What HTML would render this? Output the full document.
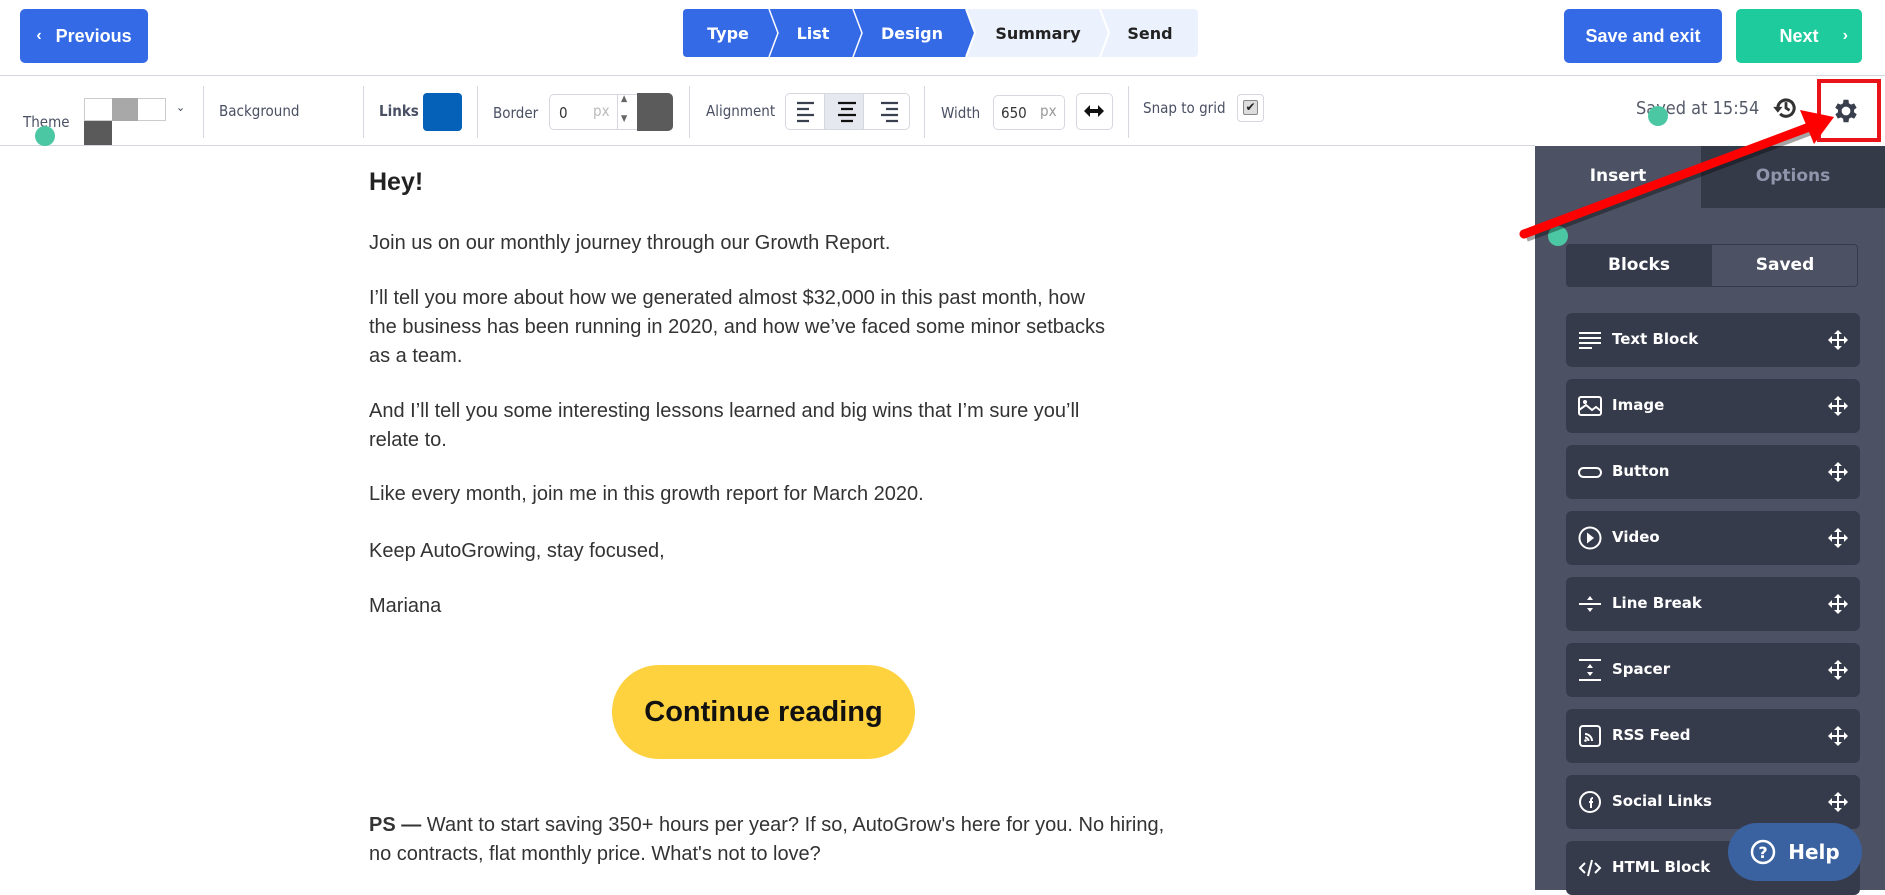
<!DOCTYPE html>
<html><head><meta charset="utf-8"><style>
*{box-sizing:border-box;margin:0;padding:0}
body{width:1885px;height:890px;overflow:hidden;background:#fff;font-family:"Liberation Sans",sans-serif;position:relative;color:#333}
.abs{position:absolute}
.btn{position:absolute;border-radius:5px;color:#fff;font-weight:bold;font-size:18px;display:flex;align-items:center;justify-content:center}
.lbl{position:absolute;font-size:15px;color:#4a5064;font-family:"DejaVu Sans Condensed","DejaVu Sans",sans-serif}
.div{position:absolute;top:86px;width:1px;height:52px;background:#d5d8de}
.side{position:absolute;left:1535px;top:146px;width:350px;height:744px;background:#4c5264}
.item{position:absolute;left:31px;width:294px;height:54px;background:#363b4b;border-radius:6px;color:#fff;font-family:"DejaVu Sans",sans-serif;font-weight:bold;font-size:15px}
.item span{position:absolute;left:46px;top:17px}
.item svg.ic{position:absolute;left:12px;top:15px}
.item svg.mv{position:absolute;right:12px;top:17px}
.c p{position:absolute;left:369px;font-size:20px;line-height:29px;color:#333;white-space:nowrap}
.dot{position:absolute;width:20px;height:20px;border-radius:50%;background:#4cc7a4}
</style></head><body>
<!-- top bar -->
<div class="btn" style="left:20px;top:9px;width:128px;height:54px;background:#356ae6"><span style="font-size:16px;margin-right:14px">‹</span>Previous</div>
<svg class="abs" style="left:683px;top:9px" width="515" height="48">
<rect x="0" y="0" width="515" height="48" rx="4" fill="#ecf2fd"/>
<path d="M4 0H283L292 24L283 48H4Q0 48 0 44V4Q0 0 4 0Z" fill="#356ae6"/>
<path d="M86 0L95 24L86 48M170 0L179 24L170 48" stroke="#fff" stroke-width="1.5" fill="none"/>
<path d="M283 0L292 24L283 48M417 0L426 24L417 48" stroke="#fff" stroke-width="2" fill="none"/>
<g font-family="DejaVu Sans, sans-serif" font-weight="bold" font-size="16" text-anchor="middle">
<text x="45" y="30" fill="#fff">Type</text><text x="130" y="30" fill="#fff">List</text><text x="229" y="30" fill="#fff">Design</text>
<text x="355" y="30" fill="#222">Summary</text><text x="467" y="30" fill="#222">Send</text></g>
</svg>
<div class="btn" style="left:1564px;top:9px;width:158px;height:54px;background:#356ae6">Save and exit</div>
<div class="btn" style="left:1736px;top:9px;width:126px;height:54px;background:#1dcb9c">Next<span style="position:absolute;right:14px;font-size:16px">›</span></div>
<div class="abs" style="left:0;top:75px;width:1885px;height:1px;background:#d3d6dd"></div>
<div class="abs" style="left:0;top:145px;width:1535px;height:1px;background:#d3d6dd"></div>
<!-- toolbar -->
<div class="lbl" style="left:23px;top:113px">Theme</div>
<div class="abs" style="left:84px;top:98px;width:82px;height:23px;border:1px solid #ccc;background:#fff"></div>
<div class="abs" style="left:112px;top:98px;width:26px;height:23px;background:#a8a8a8"></div>
<div class="abs" style="left:84px;top:121px;width:28px;height:24px;background:#5a5a5a"></div>
<div class="lbl" style="left:176px;top:100px;font-size:12px">⌄</div>
<div class="div" style="left:203px"></div>
<div class="lbl" style="left:219px;top:102px">Background</div>
<div class="div" style="left:363px"></div>
<div class="lbl" style="left:379px;top:102px;font-weight:bold">Links</div>
<div class="abs" style="left:423px;top:93px;width:39px;height:38px;background:#0560b8;border-radius:4px"></div>
<div class="div" style="left:477px"></div>
<div class="lbl" style="left:493px;top:104px">Border</div>
<div class="abs" style="left:549px;top:94px;width:124px;height:36px;border:1px solid #d5d8de;border-radius:5px;background:#fff"></div>
<div class="abs" style="left:637px;top:93px;width:36px;height:38px;background:#5b5b5b;border-radius:0 5px 5px 0"></div>
<div class="abs" style="left:617px;top:94px;width:1px;height:36px;background:#d5d8de"></div>
<div class="lbl" style="left:559px;top:104px;color:#333">0</div>
<div class="lbl" style="left:593px;top:102px;color:#bbb">px</div>
<div class="lbl" style="left:621px;top:94px;font-size:9px;color:#666">▲</div>
<div class="lbl" style="left:621px;top:114px;font-size:9px;color:#666">▼</div>
<div class="div" style="left:689px"></div>
<div class="lbl" style="left:706px;top:102px">Alignment</div>
<div class="abs" style="left:785px;top:93px;width:125px;height:37px;border:1px solid #d5d8de;border-radius:5px;background:#fff;overflow:hidden"><div style="position:absolute;left:38px;top:0;width:40px;height:37px;background:#e5e8ee;border-left:1px solid #d5d8de;border-right:1px solid #d5d8de"></div></div>
<svg class="abs" style="left:785px;top:93px" width="125" height="37"><g stroke="#3a4050" stroke-width="2.2"><path d="M12 10h17M12 16h12M12 22h17M12 28h12"/><path d="M53 10h18M56 16h12M53 22h18M56 28h12" stroke="#111"/><path d="M96 10h17M101 16h12M96 22h17M101 28h12"/></g></svg>
<div class="div" style="left:924px"></div>
<div class="lbl" style="left:941px;top:104px">Width</div>
<div class="abs" style="left:993px;top:95px;width:72px;height:35px;border:1px solid #d5d8de;border-radius:5px"></div>
<div class="lbl" style="left:1001px;top:104px;color:#333">650</div>
<div class="lbl" style="left:1040px;top:102px;color:#999">px</div>
<div class="abs" style="left:1076px;top:93px;width:37px;height:37px;border:1px solid #d5d8de;border-radius:5px"></div>
<svg class="abs" style="left:1083px;top:103px" width="22" height="16"><path d="M1 8L7 2V6H15V2L21 8L15 14V10H7V14Z" fill="#111"/></svg>
<div class="div" style="left:1128px"></div>
<div class="lbl" style="left:1143px;top:99px">Snap to grid</div>
<div class="abs" style="left:1237px;top:94px;width:27px;height:28px;border:1px solid #d5d8de;border-radius:4px"></div>
<div class="abs" style="left:1243px;top:100px;width:15px;height:15px;border:1px solid #888;border-radius:2px;background:#ddd;font-size:12px;line-height:13px;text-align:center;color:#222">✔</div>
<div class="lbl" style="left:1636px;top:98px;font-size:18px;color:#555a68">Saved at 15:54</div>
<svg class="abs" style="left:1772px;top:94px" width="28" height="28" viewBox="0 0 24 24"><path d="M5 12a7 7 0 1 1 2 5" stroke="#333" stroke-width="2.6" fill="none"/><path d="M1 11h8l-4 5z" fill="#333"/><path d="M12 7v5l3 2" stroke="#333" stroke-width="2.4" fill="none"/></svg>
<svg class="abs" style="left:1831px;top:96px" width="30" height="30" viewBox="0 0 24 24"><path fill="#3a3f4d" d="M19.4 13a7.5 7.5 0 0 0 0-2l2.1-1.6-2-3.5-2.5 1a7 7 0 0 0-1.7-1L15 3h-4l-.4 2.9a7 7 0 0 0-1.7 1l-2.5-1-2 3.5L6.6 11a7.5 7.5 0 0 0 0 2l-2.1 1.6 2 3.5 2.5-1a7 7 0 0 0 1.7 1L11 21h4l.4-2.9a7 7 0 0 0 1.7-1l2.5 1 2-3.5zM13 15.5A3.5 3.5 0 1 1 13 8.5a3.5 3.5 0 0 1 0 7z" transform="translate(-1 0)"/></svg>
<div class="abs" style="left:1817px;top:79px;width:64px;height:63px;border:4px solid #e8141a"></div>
<!-- content -->
<div class="c">
<p style="top:168px;font-size:25px;font-weight:bold;color:#222">Hey!</p>
<p style="top:229px">Join us on our monthly journey through our Growth Report.</p>
<p style="top:284px">I’ll tell you more about how we generated almost $32,000 in this past month, how<br>the business has been running in 2020, and how we’ve faced some minor setbacks<br>as a team.</p>
<p style="top:397px">And I’ll tell you some interesting lessons learned and big wins that I’m sure you’ll<br>relate to.</p>
<p style="top:480px">Like every month, join me in this growth report for March 2020.</p>
<p style="top:537px">Keep AutoGrowing, stay focused,</p>
<p style="top:592px">Mariana</p>
<p style="top:811px"><b>PS —</b> Want to start saving 350+ hours per year? If so, AutoGrow's here for you. No hiring,<br>no contracts, flat monthly price. What's not to love?</p>
</div>
<div class="abs" style="left:612px;top:665px;width:303px;height:94px;border-radius:47px;background:#fed23f;color:#111;font-weight:bold;font-size:29px;display:flex;align-items:center;justify-content:center">Continue reading</div>
<!-- sidebar -->
<div class="side">
<div class="abs" style="left:166px;top:0;width:184px;height:62px;background:#353a49"></div>
<div class="abs" style="left:0;top:20px;width:166px;text-align:center;color:#fff;font-weight:bold;font-size:17px;font-family:'DejaVu Sans',sans-serif">Insert</div>
<div class="abs" style="left:166px;top:20px;width:184px;text-align:center;color:#8f96ab;font-weight:bold;font-size:17px;font-family:'DejaVu Sans',sans-serif">Options</div>
<div class="abs" style="left:31px;top:98px;width:292px;height:43px;border:1px solid #363b4b;border-radius:4px;background:#4c5264"></div>
<div class="abs" style="left:31px;top:98px;width:146px;height:43px;background:#363b4b;border-radius:4px 0 0 4px;color:#fff;font-weight:bold;font-size:17px;text-align:center;line-height:43px;font-family:'DejaVu Sans',sans-serif">Blocks</div>
<div class="abs" style="left:177px;top:98px;width:146px;height:43px;color:#fff;font-weight:bold;font-size:17px;text-align:center;line-height:43px;font-family:'DejaVu Sans',sans-serif">Saved</div>
<div class="item" style="top:167px"><svg class="ic" width="24" height="24"><path d="M1 5h22M1 10h22M1 15h22M1 20h13" stroke="#fff" stroke-width="2"/></svg><span>Text Block</span><svg class="mv" width="20" height="20"><path d="M10 0l4 4h-3v5h5V6l4 4-4 4v-3h-5v5h3l-4 4-4-4h3v-5H4v3L0 10l4-4v3h5V4H6z" fill="#fff"/></svg></div>
<div class="item" style="top:233px"><svg class="ic" width="24" height="24"><rect x="1" y="3" width="22" height="18" rx="2" stroke="#fff" stroke-width="2" fill="none"/><path d="M1 16l7-5 6 5 4-3 5 4" stroke="#fff" stroke-width="2" fill="none"/><circle cx="7" cy="8" r="2" fill="#fff"/></svg><span>Image</span><svg class="mv" width="20" height="20"><path d="M10 0l4 4h-3v5h5V6l4 4-4 4v-3h-5v5h3l-4 4-4-4h3v-5H4v3L0 10l4-4v3h5V4H6z" fill="#fff"/></svg></div>
<div class="item" style="top:299px"><svg class="ic" width="24" height="24"><rect x="1" y="8" width="22" height="9" rx="4.5" stroke="#fff" stroke-width="2" fill="none"/></svg><span>Button</span><svg class="mv" width="20" height="20"><path d="M10 0l4 4h-3v5h5V6l4 4-4 4v-3h-5v5h3l-4 4-4-4h3v-5H4v3L0 10l4-4v3h5V4H6z" fill="#fff"/></svg></div>
<div class="item" style="top:365px"><svg class="ic" width="24" height="24"><circle cx="12" cy="12" r="10.5" stroke="#fff" stroke-width="2" fill="none"/><path d="M9 6.5l7 5.5-7 5.5z" fill="#fff"/></svg><span>Video</span><svg class="mv" width="20" height="20"><path d="M10 0l4 4h-3v5h5V6l4 4-4 4v-3h-5v5h3l-4 4-4-4h3v-5H4v3L0 10l4-4v3h5V4H6z" fill="#fff"/></svg></div>
<div class="item" style="top:431px"><svg class="ic" width="24" height="24"><path d="M1 12h22" stroke="#fff" stroke-width="2"/><path d="M9 8l3-4 3 4zM9 16l3 4 3-4z" fill="#fff"/></svg><span>Line Break</span><svg class="mv" width="20" height="20"><path d="M10 0l4 4h-3v5h5V6l4 4-4 4v-3h-5v5h3l-4 4-4-4h3v-5H4v3L0 10l4-4v3h5V4H6z" fill="#fff"/></svg></div>
<div class="item" style="top:497px"><svg class="ic" width="24" height="24"><path d="M1 2h22M1 22h22" stroke="#fff" stroke-width="2"/><path d="M9 10l3-4 3 4zM9 14l3 4 3-4z" fill="#fff"/></svg><span>Spacer</span><svg class="mv" width="20" height="20"><path d="M10 0l4 4h-3v5h5V6l4 4-4 4v-3h-5v5h3l-4 4-4-4h3v-5H4v3L0 10l4-4v3h5V4H6z" fill="#fff"/></svg></div>
<div class="item" style="top:563px"><svg class="ic" width="24" height="24"><rect x="2" y="2" width="20" height="20" rx="3" stroke="#fff" stroke-width="2" fill="none"/><path d="M7 10a7 7 0 0 1 7 7M7 13.5a3.5 3.5 0 0 1 3.5 3.5" stroke="#fff" stroke-width="2" fill="none"/><circle cx="7.5" cy="16.5" r="1.3" fill="#fff"/></svg><span>RSS Feed</span><svg class="mv" width="20" height="20"><path d="M10 0l4 4h-3v5h5V6l4 4-4 4v-3h-5v5h3l-4 4-4-4h3v-5H4v3L0 10l4-4v3h5V4H6z" fill="#fff"/></svg></div>
<div class="item" style="top:629px"><svg class="ic" width="24" height="24"><circle cx="12" cy="12" r="10" stroke="#fff" stroke-width="2" fill="none"/><path d="M13 18v-6h2M11 12h4M13 12v-2a2 2 0 0 1 2-2" stroke="#fff" stroke-width="2" fill="none"/></svg><span>Social Links</span><svg class="mv" width="20" height="20"><path d="M10 0l4 4h-3v5h5V6l4 4-4 4v-3h-5v5h3l-4 4-4-4h3v-5H4v3L0 10l4-4v3h5V4H6z" fill="#fff"/></svg></div>
<div class="item" style="top:695px"><svg class="ic" width="24" height="24"><path d="M7 7l-5 5 5 5M17 7l5 5-5 5M14 4l-4 16" stroke="#fff" stroke-width="2" fill="none"/></svg><span>HTML Block</span></div>
</div>
<div class="abs" style="left:1728px;top:823px;width:134px;height:58px;border-radius:29px;background:#3a62a0;color:#fff;font-family:'DejaVu Sans',sans-serif;font-weight:bold;font-size:20px;display:flex;align-items:center;justify-content:center"><svg width="26" height="26" style="margin-right:12px"><circle cx="13" cy="13" r="11" stroke="#fff" stroke-width="2.5" fill="none"/><text x="13" y="19" text-anchor="middle" fill="#fff" font-size="16" font-weight="bold" font-family="DejaVu Sans">?</text></svg>Help</div>
<!-- dots -->
<div class="dot" style="left:35px;top:126px"></div>
<div class="dot" style="left:1648px;top:106px"></div>
<div class="dot" style="left:1548px;top:226px"></div>
<!-- arrow -->
<svg class="abs" style="left:0;top:0" width="1885" height="890"><g transform="translate(2,3)" opacity="0.35"><path d="M1524 234L1812 126" stroke="#000" stroke-width="10"/></g><path d="M1524 234L1812 126" stroke="#f00" stroke-width="9" stroke-linecap="round"/><path d="M1834 117L1800 110L1814 144Z" fill="#f00"/></svg>
</body></html>
